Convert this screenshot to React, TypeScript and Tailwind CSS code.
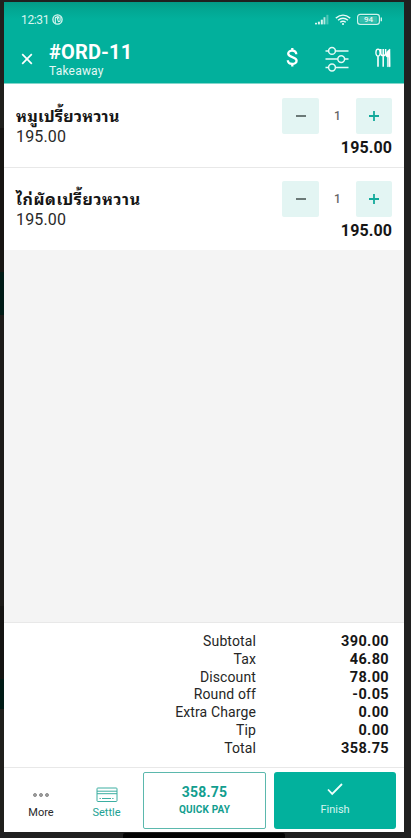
import React from "react";

const items = [
  { name: "หมูเปรี้ยวหวาน", price: "195.00", row: "h-[83px]", top: "pt-[14px]", left: "pt-[22px]", spacing: "tracking-[0.3px]" },
  { name: "ไก่ผัดเปรี้ยวหวาน", price: "195.00", row: "h-[82px]", top: "pt-[13px]", left: "pt-[21px]", spacing: "tracking-[0.6px]" },
];

const totals = [
  ["Subtotal", "390.00"],
  ["Tax", "46.80"],
  ["Discount", "78.00"],
  ["Round off", "-0.05"],
  ["Extra Charge", "0.00"],
  ["Tip", "0.00"],
  ["Total", "358.75"],
];

function StatusIcons() {
  return (
    <svg width="70" height="14" viewBox="0 0 70 14" fill="none" className="mt-[2px] block">
      <g fill="#dcf5f0">
        <rect x="1" y="9.8" width="2" height="1.6" />
        <rect x="3.9" y="8.7" width="2" height="2.7" />
        <rect x="6.8" y="6.7" width="2" height="4.7" />
        <rect x="9.5" y="4.2" width="1.9" height="7.2" opacity="0.8" />
        <rect x="12.4" y="1.8" width="2" height="9.6" opacity="0.35" />
      </g>
      <g stroke="#e6faf6" strokeWidth="1.4">
        <path d="M21.8 5.1 Q29 -0.9 36.2 5.1" />
        <path d="M24 7.3 Q29 3.3 34 7.3" />
        <path d="M26.2 9.3 Q29 7.3 31.8 9.3" />
      </g>
      <circle cx="29" cy="11" r="1.1" fill="#e6faf6" />
      <rect x="43.6" y="1.4" width="21.8" height="10" rx="2.6" stroke="#d2f2ec" strokeWidth="1.2" />
      <rect x="45.3" y="3" width="18" height="6.8" rx="1" fill="#9adcd1" fillOpacity="0.35" />
      <path d="M67.3 4.5v3.8" stroke="#d2f2ec" strokeWidth="1.4" />
      <text x="54.5" y="9.4" textAnchor="middle" fontSize="8" fontWeight="500" fill="#e6faf6" fontFamily="Roboto, sans-serif">94</text>
    </svg>
  );
}

function Header() {
  return (
    <header className="flex h-[82px] shrink-0 flex-col border-b border-[#83d6cb] bg-[linear-gradient(180deg,#049a87_0px,#02a692_7px,#02b09c_17px)] text-white">
      <div className="flex h-[34px] items-center justify-between pr-[20px] pl-[17px]">
        <div className="flex items-center gap-[4px] pt-[1px] text-[#d8f5ef]">
          <span className="w-[27px] text-[12px] leading-[14px] tracking-[-0.35px] whitespace-nowrap">12:31</span>
          <svg width="11" height="11" viewBox="0 0 11 11" fill="none" className="mb-[1px] block">
            <circle cx="5.5" cy="5.5" r="4.6" stroke="#dcf7f2" strokeWidth="1.3" />
            <path d="M3.3 9V4.2c0-1.4 1.8-1.4 2.1 0l.7 2.6c.3 1.2 2 1 2-.4V2.2M5.2 2.2c1.1-.1 1.3.8 1.3 2.2" stroke="#dcf7f2" strokeWidth="1.1" />
          </svg>
        </div>
        <div className="w-[70px]">
          <StatusIcons />
        </div>
      </div>
      <div className="flex h-[47px] items-start pl-[17px]">
        <svg width="12" height="12" viewBox="0 0 12 12" className="mt-[17px] block" fill="none" stroke="#fff" strokeWidth="1.7">
          <path d="M1.2 1.2 10.8 10.8M10.8 1.2 1.2 10.8" />
        </svg>
        <div className="ml-[16px] flex-1">
          <div className="mt-[4px] text-[20px] leading-[24px] font-bold tracking-[0.15px]">#ORD-11</div>
          <div className="text-[12px] leading-[14px] tracking-[0.2px] text-[#e4f8f5]">Takeaway</div>
        </div>
        <div className="flex pt-[10px] pr-[12px]">
          <svg width="14" height="24" viewBox="0 0 14 24" fill="none" stroke="#fff" className="mr-[25px] block">
            <path d="M7.3 2v3M7.3 17.2v3.3" strokeWidth="2.3" />
            <path d="M11.3 8.2C11.1 3.5 3.2 3.6 3.2 7.6 3.2 12 11.6 10.1 11.6 14.7 11.6 19 3 19 2.8 14.2" strokeWidth="2.3" />
          </svg>
          <svg width="26" height="26" viewBox="0 0 26 26" fill="none" stroke="#e4faf6" strokeWidth="1.5" className="mr-[25px] block">
            <path d="M1.5 4.9h3.1M11.4 4.9H24.5M1.5 13.1h12.3M20.6 13.1h3.9M1.5 21.5h3.1M11.4 21.5h13.1" />
            <circle cx="8" cy="4.9" r="3.4" />
            <circle cx="17.2" cy="13.1" r="3.4" />
            <circle cx="8" cy="21.5" r="3.4" />
          </svg>
          <svg width="17" height="24" viewBox="0 0 17 24" fill="none" stroke="#fff" className="block">
            <ellipse cx="3" cy="6.7" rx="2.1" ry="3.5" strokeWidth="1.3" />
            <path d="M3 10.2V20.7" strokeWidth="1.6" />
            <path d="M5.8 3v4.6c0 2.8 4.8 2.8 4.8 0V3M8.2 3V20.7" strokeWidth="1.5" />
            <path d="M15 3C12.3 4.2 10.7 7.2 10.9 9.8c.1.8.6 1.2 1.5 1.2v9.7h1V11.5H14v9.2h1.2z" fill="#fff" strokeWidth="0.5" />
          </svg>
        </div>
      </div>
    </header>
  );
}

function ItemRow({ item }: { item: (typeof items)[number] }) {
  return (
    <section className={"flex shrink-0 justify-between bg-white px-[12px] " + item.row}>
      <div className={item.left}>
        <div className={"h-[22px] font-['Noto_Sans_Thai_Looped','Noto_Looped_Thai','Loma','Garuda','Waree','TlwgTypo','Noto_Serif_Thai',sans-serif] text-[16px] leading-[19px] font-bold whitespace-nowrap text-[#151515] " + item.spacing}>
          {item.name}
        </div>
        <div className="text-[16px] leading-[18px] tracking-[0.15px] text-[#292929]">{item.price}</div>
      </div>
      <div className={"w-[110px] " + item.top}>
        <div className="flex items-center justify-between">
          <button className="flex h-[36px] w-[37px] items-center justify-center rounded-[2px] bg-[#e3f5f3]">
            <span className="h-[2px] w-[10px] bg-[#6b7977]" />
          </button>
          <span className="text-[12px] leading-[14px] font-medium text-[#666]">1</span>
          <button className="flex h-[36px] w-[36px] items-center justify-center rounded-[2px] bg-[#e3f5f3]">
            <svg width="10" height="10" viewBox="0 0 10 10" stroke="#13aa9b" strokeWidth="1.8" className="block">
              <path d="M5 0v10M0 5h10" />
            </svg>
          </button>
        </div>
        <div className="mt-[4px] text-right text-[16px] leading-[19px] font-bold tracking-[0.1px] text-[#161616]">{item.price}</div>
      </div>
    </section>
  );
}

function Totals() {
  return (
    <section className="h-[145px] shrink-0 border-t border-[#e8e8e8] bg-white pt-[9px] pr-[15px]">
      {totals.map(([label, value]) => (
        <div key={label} className="flex h-[17.75px] items-baseline justify-end text-[14px] leading-[18px]">
          <span className="tracking-[0.12px] text-[#262626]">{label}</span>
          <span className="w-[133px] text-right text-[14.5px] font-bold tracking-[0.35px] text-[#161616]">{value}</span>
        </div>
      ))}
    </section>
  );
}

function Footer() {
  return (
    <footer className="flex h-[65px] shrink-0 border-t border-[#e8e8e8] bg-white">
      <button className="flex w-[74px] flex-col items-center pt-[24px]">
        <svg width="18" height="6" viewBox="0 0 18 6" fill="#a6a6a6" stroke="#777" strokeWidth="0.8" className="block">
          <circle cx="3" cy="3" r="1.5" />
          <circle cx="9" cy="3" r="1.5" />
          <circle cx="15" cy="3" r="1.5" />
        </svg>
        <span className="mt-[8px] text-[11px] leading-[13px] text-[#292929]">More</span>
      </button>
      <button className="flex w-[57px] flex-col items-center pt-[19px]">
        <svg width="22" height="16" viewBox="0 0 22 16" fill="none" stroke="#3caea1" strokeWidth="1" className="block">
          <rect x="1" y="1" width="20" height="13.5" rx="0.8" />
          <path d="M1 4.2h20M1 6.7h20M3.5 11.5h1.3M6 11.5h9M16.2 11.5h1.3" />
        </svg>
        <span className="mt-[3px] text-[11px] leading-[13px] text-[#21a294]">Settle</span>
      </button>
      <button className="mt-[4px] ml-[8px] flex h-[57px] w-[123px] flex-col items-center rounded-[2px] border border-[#5bb8ad] pt-[11px] text-[#129e8f]">
        <span className="text-[14px] leading-[17px] font-bold tracking-[0.2px]">358.75</span>
        <span className="mt-[2px] text-[10px] leading-[13px] font-bold tracking-[0.15px]">QUICK PAY</span>
      </button>
      <button className="mt-[4px] ml-[8px] flex h-[57px] w-[122px] flex-col items-center rounded-[3px] bg-[#02b19d] pt-[11px] text-[#d6f5f0]">
        <svg width="16" height="13" viewBox="0 0 16 13" fill="none" stroke="#effffc" strokeWidth="1.8" className="block">
          <path d="M1 6.5 5.2 10.9 15 1" />
        </svg>
        <span className="mt-[7px] text-[11px] leading-[13px]">Finish</span>
      </button>
    </footer>
  );
}

export default function App() {
  return (
    <div className="flex h-[838px] w-[411px] flex-col overflow-hidden bg-[#202020] font-['Roboto','Noto_Sans',sans-serif]">
      <div className="h-[2px] shrink-0" />
      <div className="flex h-[830px] shrink-0">
        <aside className="flex w-[4px] flex-col bg-[#201f1c]">
          <div className="mt-[126px] h-[144px] bg-[#171512]" />
          <div className="h-[43px] bg-[#001b16]" />
          <div className="h-[291px] bg-[#1c1a18]" />
          <div className="h-[73px] bg-[#151412]" />
          <div className="h-[30px] bg-[#001b16]" />
        </aside>
        <main className="flex w-[400px] flex-col bg-[#f4f4f4]">
          <Header />
          <ItemRow item={items[0]} />
          <div className="h-[1px] shrink-0 bg-[#e8e8e8]" />
          <ItemRow item={items[1]} />
          <div className="flex-1" />
          <Totals />
          <Footer />
        </main>
      </div>
      <div className="mt-[1px] ml-[123px] h-[5px] w-[162px] rounded-t-[2px] bg-[#030303]" />
    </div>
  );
}
